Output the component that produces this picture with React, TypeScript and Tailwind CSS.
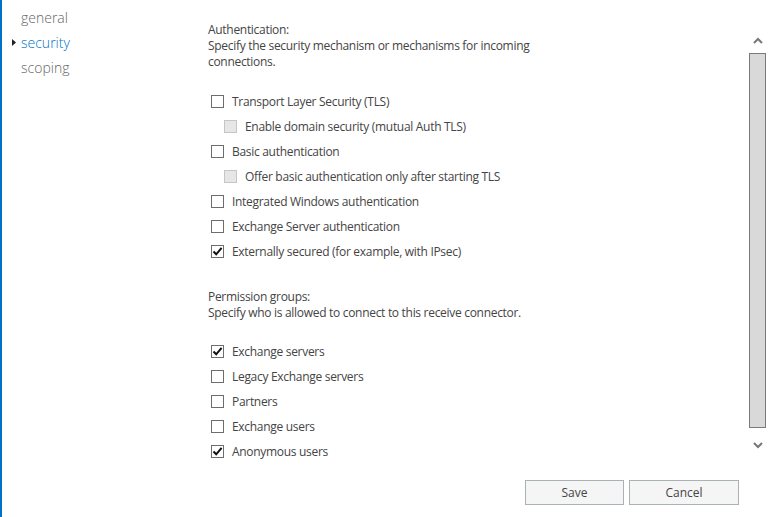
import type { ReactNode } from "react";

const font = { fontFamily: '"Open Sans", "Noto Sans", sans-serif' };

type Item = { label: string; checked?: boolean; disabled?: boolean; indent?: boolean };

const authItems: Item[] = [
  { label: "Transport Layer Security (TLS)" },
  { label: "Enable domain security (mutual Auth TLS)", disabled: true, indent: true },
  { label: "Basic authentication" },
  { label: "Offer basic authentication only after starting TLS", disabled: true, indent: true },
  { label: "Integrated Windows authentication" },
  { label: "Exchange Server authentication" },
  { label: "Externally secured (for example, with IPsec)", checked: true },
];

const permissionItems: Item[] = [
  { label: "Exchange servers", checked: true },
  { label: "Legacy Exchange servers" },
  { label: "Partners" },
  { label: "Exchange users" },
  { label: "Anonymous users", checked: true },
];

function CheckRow({ item }: { item: Item }) {
  return (
    <div className={`flex h-[25px] items-center ${item.indent ? "pl-[16px]" : "pl-[3px]"}`}>
      <span
        className={`flex h-[13px] w-[13px] shrink-0 items-center justify-center border ${
          item.disabled ? "border-[#c6c6c6] bg-[#e6e6e6]" : "border-[#6d6d6d] bg-white"
        }`}
      >
        {item.checked ? (
          <svg width="11" height="11" viewBox="0 0 11 11">
            <path d="M1.5 5.5 L4.2 8.3 L9.6 1.8" fill="none" stroke="#111" strokeWidth="2" />
          </svg>
        ) : null}
      </span>
      <span className="ml-[8px] text-[12px] tracking-[-0.3px] text-[#444]">{item.label}</span>
    </div>
  );
}

function Heading({ children }: { children: ReactNode }) {
  return <div className="text-[12px] leading-[16px] tracking-[-0.3px] text-[#444]">{children}</div>;
}

export default function App() {
  return (
    <div className="flex h-[517px] w-[771px] flex-col border-l-2 border-[#0072c6] bg-white" style={font}>
      <div className="flex min-h-0 flex-1">
        <nav className="w-[206px] shrink-0 pt-[5px]">
          <div className="pl-[19px] text-[14px] font-light leading-[25px] text-[#666]">general</div>
          <div className="relative pl-[19px] text-[14px] font-light leading-[25px] text-[#0072c6]">
            <svg width="4" height="7" viewBox="0 0 4 7" className="absolute left-[10px] top-[9px]">
              <path d="M0 0 L4 3.5 L0 7 Z" fill="#222" />
            </svg>
            security
          </div>
          <div className="pl-[19px] text-[14px] font-light leading-[25px] text-[#666]">scoping</div>
        </nav>

        <main className="flex-1 pt-[22px]">
          <Heading>Authentication:</Heading>
          <Heading>
            Specify the security mechanism or mechanisms for incoming
            <br />
            connections.
          </Heading>
          <div className="mt-[19px]">
            {authItems.map((item) => (
              <CheckRow key={item.label} item={item} />
            ))}
          </div>

          <div className="mt-[25px]">
            <Heading>Permission groups:</Heading>
            <Heading>Specify who is allowed to connect to this receive connector.</Heading>
          </div>
          <div className="mt-[18px]">
            {permissionItems.map((item) => (
              <CheckRow key={item.label} item={item} />
            ))}
          </div>
        </main>

        <div className="mr-[5px] flex w-[17px] shrink-0 flex-col items-center pt-[37px]">
          <svg width="10" height="7" viewBox="0 0 10 7">
            <path d="M1 6 L5 2 L9 6" fill="none" stroke="#777" strokeWidth="2" />
          </svg>
          <div className="mt-[9px] h-[375px] w-[17px] border border-[#7a7a7a] bg-[#d9d9d9]" />
          <svg width="10" height="7" viewBox="0 0 10 7" className="mt-[14px]">
            <path d="M1 1 L5 5 L9 1" fill="none" stroke="#777" strokeWidth="2" />
          </svg>
        </div>
      </div>

      <div className="flex justify-end gap-[5px] pb-[12px] pr-[32px]">
        <button className="h-[25px] w-[99px] border border-[#a9b3b6] bg-[#f5f5f5] text-[12px] text-[#444]">
          Save
        </button>
        <button className="h-[25px] w-[110px] border border-[#a9b3b6] bg-[#f5f5f5] text-[12px] text-[#444]">
          Cancel
        </button>
      </div>
    </div>
  );
}
